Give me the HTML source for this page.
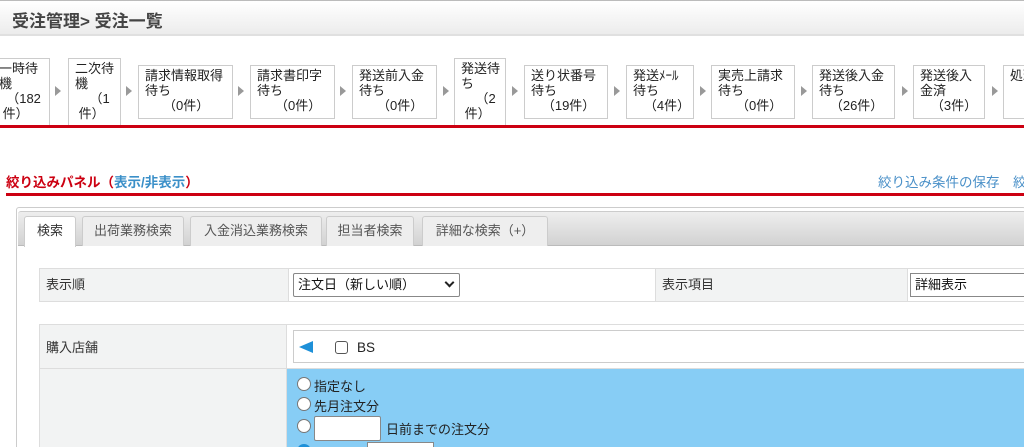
<html style="height:447px;overflow:hidden"><head><style>
body{margin:0;width:1024px;height:447px;overflow:hidden;background:#fff;font-family:"Liberation Sans","Noto Sans CJK JP",sans-serif;font-size:12px;color:#333;position:relative}
.a{position:absolute}
.box{position:absolute;border:1px solid #ccc;background:#fff;box-sizing:border-box;padding:2px 6px;line-height:15px;font-size:13px;color:#222;white-space:nowrap;overflow:hidden}
.arr{position:absolute;width:0;height:0;border-top:5px solid transparent;border-bottom:5px solid transparent;border-left:6px solid #999;top:86px}
.tab{position:absolute;top:216px;height:30px;box-sizing:border-box;border:1px solid #ccc;border-bottom:none;background:#eee;color:#555;font-size:13px;line-height:28px;text-align:center;border-radius:3px 3px 0 0}
.cell{position:absolute;box-sizing:border-box;border:1px solid #ddd;padding-left:6px;font-size:13px}
</style></head><body>
<div class="a" style="left:0;top:0;width:1024px;height:36px;background:linear-gradient(#fff,#ececec);border-top:1px solid #bbb;border-bottom:2px solid #e0e0e0;box-sizing:border-box"></div>
<div class="a" style="left:12px;top:7px;font-size:17px;font-weight:bold;color:#444">受注管理&gt; 受注一覧</div>

<div class="box" style="left:-8px;top:58px;width:58px;height:68px;padding-left:6px">一時待<br>機<br>&nbsp;&nbsp;（182<br>&nbsp;件）</div>
<div class="arr" style="left:55px"></div>
<div class="box" style="left:68px;top:58px;width:53px;height:68px">二次待<br>機<br>&nbsp;&nbsp;&nbsp;&nbsp;（1<br>&nbsp;件）</div>
<div class="arr" style="left:126px"></div>
<div class="box" style="left:138px;top:65px;width:95px;height:54px">請求情報取得<br>待ち<br>&nbsp;&nbsp;&nbsp;&nbsp;&nbsp;（0件）</div>
<div class="arr" style="left:238px"></div>
<div class="box" style="left:250px;top:65px;width:85px;height:54px">請求書印字<br>待ち<br>&nbsp;&nbsp;&nbsp;&nbsp;&nbsp;（0件）</div>
<div class="arr" style="left:340px"></div>
<div class="box" style="left:352px;top:65px;width:85px;height:54px">発送前入金<br>待ち<br>&nbsp;&nbsp;&nbsp;&nbsp;&nbsp;（0件）</div>
<div class="arr" style="left:443px"></div>
<div class="box" style="left:454px;top:58px;width:52px;height:68px">発送待<br>ち<br>&nbsp;&nbsp;&nbsp;&nbsp;（2<br>&nbsp;件）</div>
<div class="arr" style="left:512px"></div>
<div class="box" style="left:524px;top:65px;width:84px;height:54px">送り状番号<br>待ち<br>&nbsp;&nbsp;&nbsp;（19件）</div>
<div class="arr" style="left:614px"></div>
<div class="box" style="left:626px;top:65px;width:68px;height:54px">発送ﾒｰﾙ<br>待ち<br>&nbsp;&nbsp;&nbsp;（4件）</div>
<div class="arr" style="left:700px"></div>
<div class="box" style="left:711px;top:65px;width:84px;height:54px">実売上請求<br>待ち<br>&nbsp;&nbsp;&nbsp;&nbsp;&nbsp;（0件）</div>
<div class="arr" style="left:801px"></div>
<div class="box" style="left:812px;top:65px;width:83px;height:54px">発送後入金<br>待ち<br>&nbsp;&nbsp;&nbsp;（26件）</div>
<div class="arr" style="left:902px"></div>
<div class="box" style="left:913px;top:65px;width:72px;height:54px">発送後入<br>金済<br>&nbsp;&nbsp;&nbsp;（3件）</div>
<div class="arr" style="left:992px"></div>
<div class="box" style="left:1003px;top:65px;width:60px;height:54px">処理<br><br>&nbsp;&nbsp;&nbsp;&nbsp;件</div>
<div class="a" style="left:0;top:125px;width:1024px;height:3px;background:#cc0011"></div>

<div class="a" style="left:6px;top:171px;font-size:13.5px;font-weight:bold;color:#cc0011">絞り込みパネル（<span style="color:#3a8fc8">表示/非表示</span>）</div>
<div class="a" style="left:878px;top:171px;font-size:13.5px;color:#4a90c8;white-space:nowrap">絞り込み条件の保存　絞</div>
<div class="a" style="left:6px;top:193px;width:1018px;height:3px;background:#cc0011"></div>

<div class="a" style="left:16px;top:207px;width:1010px;height:260px;border:1px solid #ccc;border-radius:3px;box-sizing:border-box"></div>
<div class="a" style="left:18px;top:211px;width:1006px;height:35px;background:linear-gradient(#eee,#d2d2d2);border-top:1px solid #ccc;border-bottom:1px solid #bbb;border-radius:3px 0 0 0;box-sizing:border-box"></div>
<div class="tab" style="left:24px;width:52px;background:#fff;color:#333;height:31px">検索</div>
<div class="tab" style="left:82px;width:102px">出荷業務検索</div>
<div class="tab" style="left:190px;width:132px">入金消込業務検索</div>
<div class="tab" style="left:326px;width:88px">担当者検索</div>
<div class="tab" style="left:422px;width:126px">詳細な検索（+）</div>

<div class="cell" style="left:39px;top:268px;width:250px;height:34px;background:#f2f3f3;line-height:32px">表示順</div>
<div class="cell" style="left:288px;top:268px;width:368px;height:34px"></div>
<div class="a" style="left:293px;top:273px;width:167px;height:24px;border:1px solid #888;border-radius:2px;box-sizing:border-box;font-size:13px;line-height:22px;padding-left:4px;color:#111">注文日（新しい順）</div>
<div class="a" style="left:446px;top:279px;width:5px;height:5px;border-right:2px solid #222;border-bottom:2px solid #222;transform:rotate(45deg)"></div>
<div class="cell" style="left:655px;top:268px;width:253px;height:34px;background:#f2f3f3;line-height:32px">表示項目</div>
<div class="cell" style="left:907px;top:268px;width:120px;height:34px"></div>
<div class="a" style="left:910px;top:273px;width:120px;height:24px;border:1px solid #888;box-sizing:border-box;font-size:13px;line-height:22px;padding-left:4px;color:#111">詳細表示</div>

<div class="cell" style="left:39px;top:324px;width:248px;height:45px;background:#f2f3f3;padding-top:12px">購入店舗</div>
<div class="cell" style="left:286px;top:324px;width:740px;height:45px"></div>
<div class="a" style="left:293px;top:330px;width:740px;height:33px;border:1px solid #ccc;box-sizing:border-box"></div>
<div class="a" style="left:299px;top:341px;width:0;height:0;border-top:6px solid transparent;border-bottom:6px solid transparent;border-right:14px solid #1e90d8"></div>
<div class="a" style="left:335px;top:341px;width:13px;height:13px;border:1px solid #555;border-radius:3px;box-sizing:border-box"></div>
<div class="a" style="left:357px;top:340px;font-size:13.5px;color:#222">BS</div>

<div class="cell" style="left:39px;top:368px;width:248px;height:90px;background:#f2f3f3"></div>
<div class="a" style="left:286px;top:368px;width:740px;height:90px;background:#87cdf5;border:1px solid #ddd;box-sizing:border-box"></div>
<div class="a" style="left:297px;top:377px;width:14px;height:14px;border-radius:50%;background:#fff;border:1px solid #777;box-sizing:border-box"></div>
<div class="a" style="left:314px;top:376px;font-size:13px;color:#222">指定なし</div>
<div class="a" style="left:297px;top:397px;width:14px;height:14px;border-radius:50%;background:#fff;border:1px solid #777;box-sizing:border-box"></div>
<div class="a" style="left:314px;top:396px;font-size:13px;color:#222">先月注文分</div>
<div class="a" style="left:297px;top:419px;width:14px;height:14px;border-radius:50%;background:#fff;border:1px solid #777;box-sizing:border-box"></div>
<div class="a" style="left:314px;top:416px;width:67px;height:25px;background:#fff;border:1px solid #888;box-sizing:border-box;border-radius:2px"></div>
<div class="a" style="left:386px;top:419px;font-size:13px;color:#222">日前までの注文分</div>
<div class="a" style="left:297px;top:444px;width:14px;height:14px;border-radius:50%;background:#1e90d8"></div>
<div class="a" style="left:367px;top:442px;width:67px;height:25px;background:#fff;border:1px solid #888;box-sizing:border-box"></div>
</body></html>
